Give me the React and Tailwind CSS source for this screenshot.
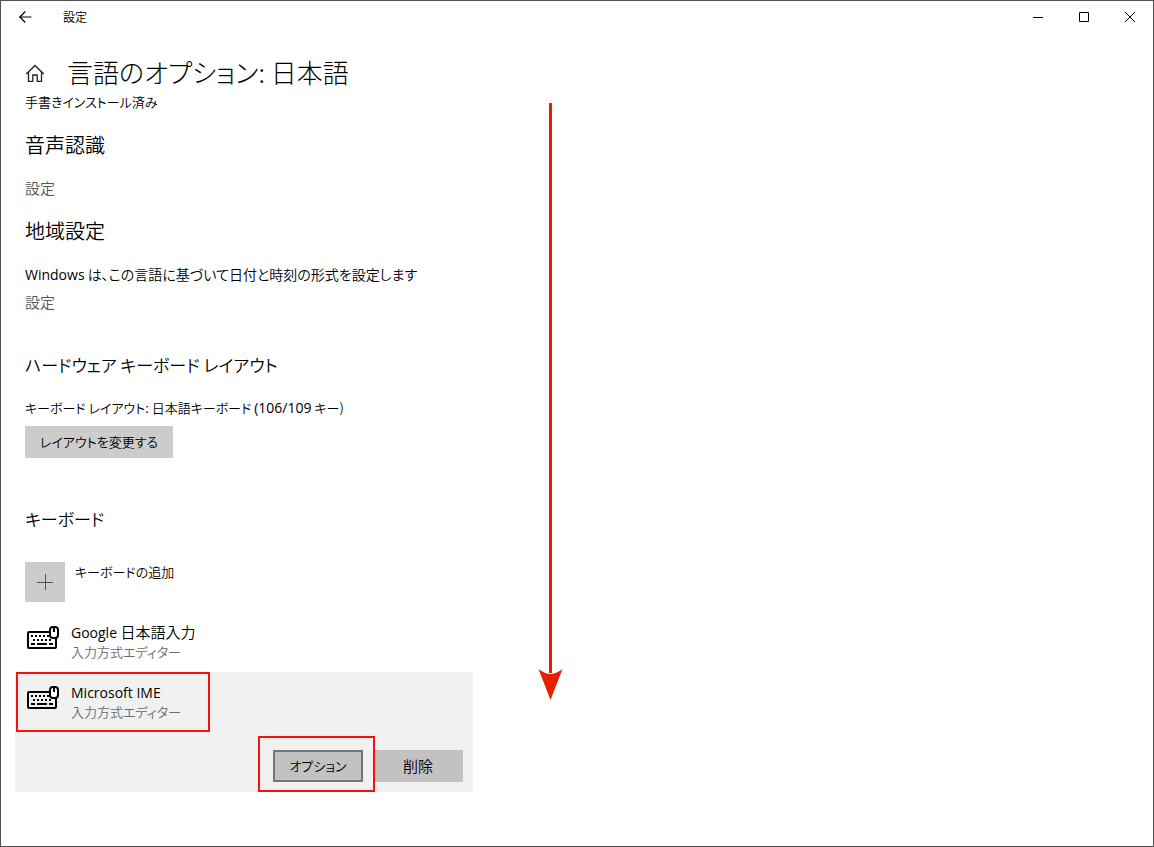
const latin = "font-['Open_Sans','Noto_Sans_CJK_JP',sans-serif] text-[14px] leading-none font-normal";

function KeyboardIcon() {
  return (
    <svg width="34" height="26" viewBox="0 0 34 26" fill="none" stroke="#000" className="shrink-0" aria-hidden="true">
      <rect x="2" y="7" width="28" height="16" rx="1" strokeWidth="2" />
      <path d="M5 11h2M9 11h2M13 11h2M17 11h2M21 11h2M7 15h2M11 15h2M15 15h2M19 15h2M23 15h2M5 19h4M11 19h10M23 19h4" strokeWidth="2" />
      <rect x="24" y="2" width="8" height="11" rx="3" strokeWidth="2" fill="#fff" />
      <path d="M28 3v4" strokeWidth="2" />
    </svg>
  );
}

function Heading({ className, children }) {
  return <h2 className={`leading-[26px] ${className}`}>{children}</h2>;
}

function InputMethod({ name }) {
  return (
    <div className="flex h-[60px] items-start gap-[11px] pl-[11px] pt-[10px]">
      <div className="pt-[3px]"><KeyboardIcon /></div>
      <div>
        <div className="h-5">{name}</div>
        <div className="h-5 text-[13px] text-[#6b6b6b]">入力方式エディター</div>
      </div>
    </div>
  );
}

export default function App() {
  return (
    <div className="relative flex min-h-screen flex-col border border-[#505050] bg-white font-['Noto_Sans_CJK_JP',sans-serif] text-[15px] leading-5 font-[350] text-black [font-feature-settings:'palt']">
      <header className="flex h-8 items-center justify-between">
        <div className="flex h-full items-center">
          <button aria-label="戻る" className="flex h-full w-12 items-center justify-center">
            <svg width="14" height="14" viewBox="0 0 14 14" fill="none" stroke="#000" strokeWidth="1.2"><path d="M13.500 7H2M7.300 1.500L1.800 7L7.300 12.500" /></svg>
          </button>
          <span className="pl-[14px] text-[12px]">設定</span>
        </div>
        <div className="flex h-full">
          <button aria-label="最小化" className="flex w-[46px] items-center justify-center">
            <svg width="10" height="10" viewBox="0 0 10 10" stroke="#000"><path d="M0 5.5h10" /></svg>
          </button>
          <button aria-label="最大化" className="flex w-[46px] items-center justify-center">
            <svg width="10" height="10" viewBox="0 0 10 10" stroke="#000" fill="none"><path d="M.5.5h9v9h-9z" /></svg>
          </button>
          <button aria-label="閉じる" className="flex w-[46px] items-center justify-center">
            <svg width="10" height="10" viewBox="0 0 10 10" stroke="#000"><path d="M0 0l10 10M10 0L0 10" /></svg>
          </button>
        </div>
      </header>

      <main className="max-w-[472px] px-6 pt-[19px]">
        <div className="flex h-10 items-center gap-[22px]">
          <button aria-label="ホーム">
            <svg width="20" height="20" viewBox="0 0 20 20" fill="none" stroke="#222" strokeWidth="1.300"><path d="M1.300 12L10 3.500l8.700 8.500M3.500 10v9.300h4.300v-6.300h4.400v6.300h4.300V10" /></svg>
          </button>
          <h1 className="text-[26px] leading-10 font-light whitespace-nowrap">言語のオプション: 日本語</h1>
        </div>
        <p className="text-[13px]">手書きインストール済み</p>

        <Heading className="mt-5 text-[20px]">音声認識</Heading>
        <a href="#speech" className="mt-5 block text-[#555]">設定</a>

        <Heading className="mt-5 text-[20px]">地域設定</Heading>
        <p className="mt-5 h-5 text-[14px] whitespace-nowrap"><span className={latin}>Windows</span> は、この言語に基づいて日付と時刻の形式を設定します</p>
        <a href="#region" className="mt-2 block text-[#555]">設定</a>

        <Heading className="mt-10 text-[17px]">ハードウェア キーボード レイアウト</Heading>
        <p className="mt-5 h-5 text-[13px]">キーボード レイアウト: 日本語キーボード <span className={latin}>(106/109</span> キー)</p>
        <button className="mt-2 block h-8 w-[148px] bg-[#ccc] text-[13px]">レイアウトを変更する</button>

        <Heading className="mt-12 text-[17px]">キーボード</Heading>
        <button className="mt-[30px] flex items-start gap-[10px] text-left text-[13px]">
          <span className="flex size-10 items-center justify-center bg-[#ccc]">
            <svg width="16" height="16" viewBox="0 0 16 16" stroke="#555"><path d="M0 8.500h16M8.500 0v16" /></svg>
          </span>
          <span>キーボードの追加</span>
        </button>

        <div className="-ml-[10px] mt-[10px] w-[458px]">
          <InputMethod name={<><span className={latin}>Google</span> 日本語入力</>} />
          <div className="relative h-[120px] bg-[#f1f1f1]">
            <InputMethod name={<span className={latin}>Microsoft IME</span>} />
            <div className="flex justify-end gap-[10px] pr-[10px] pt-[18px]">
              <button className="h-8 w-[90px] border-2 border-[#767676] bg-[#c2c2c2] text-[13px]">オプション</button>
              <button className="h-8 w-[90px] bg-[#c2c2c2]">削除</button>
            </div>
            <div className="pointer-events-none absolute top-0 left-[1px] h-[60px] w-[194px] border-2 border-[#f81010]" />
            <div className="pointer-events-none absolute top-[64px] left-[243px] h-[56px] w-[117px] border-2 border-[#f81010]" />
          </div>
        </div>
      </main>

      <svg className="pointer-events-none absolute top-[102px] left-[537px]" width="26" height="598" viewBox="0 0 26 598" fill="#e52000" aria-hidden="true">
        <path d="M11 0h3v570h-3z" />
        <path d="M0.500 566Q7 571 12.500 571Q18 571 24.500 566L12.500 597z" />
      </svg>
    </div>
  );
}
